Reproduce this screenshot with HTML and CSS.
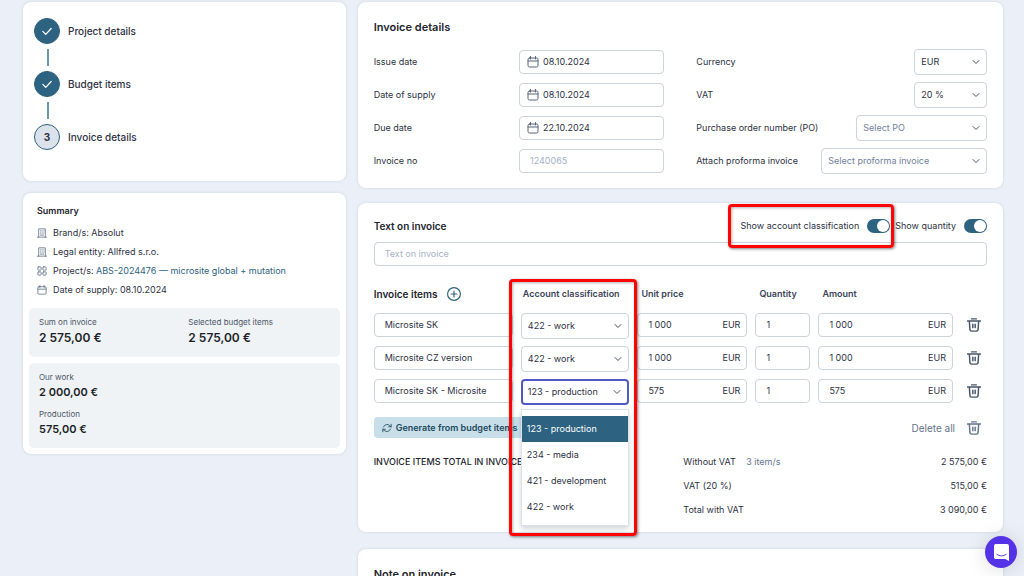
FILE: index.html
```html
<!DOCTYPE html>
<html lang="en">
  <head>
    <meta charset="UTF-8" />
    <meta name="viewport" content="width=device-width, initial-scale=1.0" />
    <title>Invoice details</title>
    <link rel="stylesheet" href="styles.css">
  </head>
  <body>
    <!-- Shared icons -->
    <svg class="sprite" aria-hidden="true">
      <symbol id="check" viewBox="0 0 24 24"><path d="M2 13l7 7L22 6" /></symbol>
      <symbol id="calendar" viewBox="0 0 24 24"><rect x="2" y="4" width="20" height="18" rx="3" /><path d="M2 10h20M7 1v5M17 1v5" /></symbol>
      <symbol id="building" viewBox="0 0 24 24"><path d="M1 22h22M4 22V2h16v20M8 7h1M12 7h1M16 7h1M8 12h1M12 12h1M16 12h1M8 17h8" /></symbol>
      <symbol id="grid" viewBox="0 0 24 24"><rect x="2" y="2" width="8" height="8" rx="2" /><rect x="14" y="2" width="8" height="8" rx="2" /><rect x="2" y="14" width="8" height="8" rx="2" /><rect x="14" y="14" width="8" height="8" rx="2" /></symbol>
      <symbol id="trash" viewBox="0 0 24 24"><path d="M1 5h22M8 1.500h8M4 5l1 15q.2 2.500 2.700 2.500h8.600q2.500 0 2.700-2.500L20 5M10 10.500v6M14 10.500v6" /></symbol>
      <symbol id="plus" viewBox="0 0 24 24"><circle cx="12" cy="12" r="11" /><path d="M12 7v10M7 12h10" /></symbol>
      <symbol id="refresh" viewBox="0 0 24 24"><path d="M22 3v6h-6M2 21v-6h6M3.500 9.500a9 9 0 0 1 15-3.300L22 9M2 15l3.500 2.800a9 9 0 0 0 15-3.300" /></symbol>
    </svg>

    <div class="layout">
      <aside class="sidebar">
        <section class="card steps-card">
          <ol class="steps">
            <li class="step">
              <span class="step-circle done"><svg class="icon"><use href="#check" /></svg></span>
              Project details
            </li>
            <li class="step">
              <span class="step-circle done"><svg class="icon"><use href="#check" /></svg></span>
              Budget items
            </li>
            <li class="step">
              <span class="step-circle">3</span>
              Invoice details
            </li>
          </ol>
        </section>

        <section class="card summary">
          <h3>Summary</h3>
          <ul class="summary-list">
            <li><svg class="icon"><use href="#building" /></svg>Brand/s: Absolut</li>
            <li><svg class="icon"><use href="#building" /></svg>Legal entity: Allfred s.r.o.</li>
            <li><svg class="icon"><use href="#grid" /></svg><span>Project/s: <a href="#">ABS-2024476 — microsite global + mutation</a></span></li>
            <li><svg class="icon"><use href="#calendar" /></svg>Date of supply: 08.10.2024</li>
          </ul>
          <dl class="panel sums">
            <div><dt>Sum on invoice</dt><dd>2 575,00 €</dd></div>
            <div><dt>Selected budget items</dt><dd>2 575,00 €</dd></div>
          </dl>
          <dl class="panel parts">
            <div><dt>Our work</dt><dd>2 000,00 €</dd></div>
            <div><dt>Production</dt><dd>575,00 €</dd></div>
          </dl>
        </section>
      </aside>

      <main class="content">
        <section class="card details">
          <h2>Invoice details</h2>
          <div class="details-grid">
            <div class="field">
              <label for="issue-date">Issue date</label>
              <div class="control date"><svg class="icon"><use href="#calendar" /></svg><input id="issue-date" type="text" value="08.10.2024" /></div>
            </div>
            <div class="field">
              <label for="currency">Currency</label>
              <select id="currency" class="short"><option>EUR</option></select>
            </div>
            <div class="field">
              <label for="supply-date">Date of supply</label>
              <div class="control date"><svg class="icon"><use href="#calendar" /></svg><input id="supply-date" type="text" value="08.10.2024" /></div>
            </div>
            <div class="field">
              <label for="vat">VAT</label>
              <select id="vat" class="short"><option>20 %</option></select>
            </div>
            <div class="field">
              <label for="due-date">Due date</label>
              <div class="control date"><svg class="icon"><use href="#calendar" /></svg><input id="due-date" type="text" value="22.10.2024" /></div>
            </div>
            <div class="field">
              <label for="po">Purchase order number (PO)</label>
              <select id="po" class="medium empty"><option>Select PO</option></select>
            </div>
            <div class="field">
              <label for="invoice-no">Invoice no</label>
              <div class="control"><input id="invoice-no" type="text" placeholder="1240065" /></div>
            </div>
            <div class="field">
              <label for="proforma">Attach proforma invoice</label>
              <select id="proforma" class="long empty"><option>Select proforma invoice</option></select>
            </div>
          </div>
        </section>

        <section class="card items">
          <div class="items-head">
            <h3><label for="invoice-text">Text on invoice</label></h3>
            <div class="toggles">
              <label class="toggle marked">Show account classification <input type="checkbox" role="switch" checked /></label>
              <label class="toggle">Show quantity <input type="checkbox" role="switch" checked /></label>
            </div>
          </div>
          <div class="control"><input id="invoice-text" type="text" placeholder="Text on invoice" /></div>

          <table class="items-table">
            <thead>
              <tr>
                <th class="col-name">
                  <div class="name-head">Invoice items
                    <button class="icon-button add" type="button" aria-label="Add item"><svg class="icon"><use href="#plus" /></svg></button>
                  </div>
                </th>
                <th class="col-class">Account classification</th>
                <th class="col-price">Unit price</th>
                <th class="col-qty">Quantity</th>
                <th class="col-amount">Amount</th>
                <th class="col-delete"></th>
              </tr>
            </thead>
            <tbody>
              <tr>
                <td><div class="control"><input type="text" aria-label="Item name" value="Microsite SK" /></div></td>
                <td><select aria-label="Account classification"><option>422 - work</option></select></td>
                <td><div class="control"><input type="text" aria-label="Unit price" value="1 000" /><span>EUR</span></div></td>
                <td><div class="control"><input type="text" aria-label="Quantity" value="1" /></div></td>
                <td><div class="control"><input type="text" aria-label="Amount" value="1 000" /><span>EUR</span></div></td>
                <td><button class="icon-button" type="button" aria-label="Delete item"><svg class="icon"><use href="#trash" /></svg></button></td>
              </tr>
              <tr>
                <td><div class="control"><input type="text" aria-label="Item name" value="Microsite CZ version" /></div></td>
                <td><select aria-label="Account classification"><option>422 - work</option></select></td>
                <td><div class="control"><input type="text" aria-label="Unit price" value="1 000" /><span>EUR</span></div></td>
                <td><div class="control"><input type="text" aria-label="Quantity" value="1" /></div></td>
                <td><div class="control"><input type="text" aria-label="Amount" value="1 000" /><span>EUR</span></div></td>
                <td><button class="icon-button" type="button" aria-label="Delete item"><svg class="icon"><use href="#trash" /></svg></button></td>
              </tr>
              <tr>
                <td><div class="control"><input type="text" aria-label="Item name" value="Microsite SK - Microsite" /></div></td>
                <td>
                  <div class="dropdown">
                    <select class="open" aria-label="Account classification"><option>123 - production</option></select>
                    <div class="menu">
                      <button class="selected" type="button">123 - production</button>
                      <button type="button">234 - media</button>
                      <button type="button">421 - development</button>
                      <button type="button">422 - work</button>
                    </div>
                  </div>
                </td>
                <td><div class="control"><input type="text" aria-label="Unit price" value="575" /><span>EUR</span></div></td>
                <td><div class="control"><input type="text" aria-label="Quantity" value="1" /></div></td>
                <td><div class="control"><input type="text" aria-label="Amount" value="575" /><span>EUR</span></div></td>
                <td><button class="icon-button" type="button" aria-label="Delete item"><svg class="icon"><use href="#trash" /></svg></button></td>
              </tr>
            </tbody>
          </table>

          <div class="actions">
            <button class="generate" type="button"><svg class="icon"><use href="#refresh" /></svg>Generate from budget items</button>
            <button class="delete-all" type="button">Delete all <svg class="icon"><use href="#trash" /></svg></button>
          </div>

          <div class="totals">
            <h4>INVOICE ITEMS TOTAL IN INVOICE</h4>
            <dl>
              <div><dt>Without VAT <span>3 item/s</span></dt><dd>2 575,00 €</dd></div>
              <div><dt>VAT (20 %)</dt><dd>515,00 €</dd></div>
              <div><dt>Total with VAT</dt><dd>3 090,00 €</dd></div>
            </dl>
          </div>
        </section>

        <section class="card note">
          <h2>Note on invoice</h2>
        </section>
      </main>
    </div>

    <button class="chat" type="button" aria-label="Open chat">
      <svg viewBox="0 0 16 18"><path class="bubble" d="M2 0h12a2 2 0 0 1 2 2v16l-4-2H2a2 2 0 0 1-2-2V2a2 2 0 0 1 2-2z" /><path class="smile" d="M3 11q5 3.500 10 0" /></svg>
    </button>
  </body>
</html>
```
FILE: styles.css
```css
*,
*::before,
*::after {
  box-sizing: border-box;
}

body {
  margin: 0;
  height: 100vh;
  overflow: hidden;
  background-color: #ebeff7;
  color: #2d3142;
  font-family: Inter, "Liberation Sans", sans-serif;
  font-size: 9px;
  line-height: 12px;
}

h2,
h3,
h4,
ul,
ol,
dl,
dd {
  margin: 0;
  padding: 0;
}

h2,
h3,
h4 {
  font-weight: 600;
  color: #22252e;
}

h2 {
  font-size: 11px;
  line-height: 16px;
}

ul,
ol {
  list-style: none;
}

a {
  color: #2d6380;
  text-decoration: none;
}

input,
select,
button {
  font: inherit;
  color: inherit;
}

button {
  border: none;
  background: none;
  padding: 0;
  cursor: pointer;
}

.sprite {
  position: absolute;
  width: 0;
  height: 0;
}

.icon {
  flex: none;
  width: 10px;
  height: 10px;
  fill: none;
  stroke: currentColor;
  stroke-width: 2;
  stroke-linecap: round;
  stroke-linejoin: round;
}

.layout {
  display: grid;
  grid-template-columns: 1fr 2fr;
  gap: 12px;
  align-items: start;
  padding: 2px 21px 0 23px;
}

.card {
  background-color: white;
  border-radius: 8px;
  box-shadow: 0 0 3px rgba(70, 100, 140, 0.2);
}

/* Left column */
.sidebar {
  display: grid;
  gap: 12px;
}

.steps-card {
  padding: 16px 11px 31px;
}

.steps {
  display: grid;
  gap: 27px;
}

.step {
  position: relative;
  display: flex;
  align-items: center;
  gap: 8px;
  font-size: 10px;
  font-weight: 500;
}

.step:not(:last-child)::after {
  content: "";
  position: absolute;
  left: 13px;
  top: 31px;
  width: 2px;
  height: 17px;
  background-color: #6a97b0;
}

.step-circle {
  display: flex;
  align-items: center;
  justify-content: center;
  width: 26px;
  height: 26px;
  border: 1px solid #2d6380;
  border-radius: 50%;
  background-color: #dce2ec;
  font-weight: 700;
}

.step-circle.done {
  background-color: #2d6380;
  color: white;
}

.step-circle .icon {
  stroke-width: 3;
}

.summary {
  padding: 12px 6px 6px;
}

.summary h3 {
  padding: 0 8px;
  font-size: 9px;
}

.summary-list {
  display: grid;
  gap: 7px;
  padding: 10px 8px 12px;
}

.summary-list li {
  display: flex;
  align-items: center;
  gap: 6px;
}

.summary-list .icon {
  color: #64748b;
}

.panel {
  padding: 8px 10px;
  border-radius: 5px;
  background-color: #eff3f6;
}

.panel dt {
  font-size: 8px;
  color: #4c5566;
}

.panel dd {
  font-size: 11px;
  font-weight: 600;
  line-height: 18px;
  color: #1c1f28;
}

.sums {
  display: grid;
  grid-template-columns: 1fr 1fr;
  gap: 8px;
  padding-bottom: 9px;
}

.sums dd {
  font-size: 12px;
  line-height: 20px;
}

.parts {
  display: grid;
  gap: 7px;
  margin-top: 6px;
  padding-bottom: 10px;
}

/* Form controls */
.control {
  display: flex;
  align-items: center;
  height: 24px;
  padding: 0 6px 0 10px;
  border: 1px solid #cbd3dd;
  border-radius: 4px;
  background-color: white;
}

.control input {
  flex: 1;
  width: 100%;
  min-width: 0;
  padding: 0;
  border: none;
  outline: none;
  background: none;
}

.control input::placeholder {
  color: #a5b1c6;
}

.control.date {
  gap: 4px;
  padding-left: 7px;
}

.control .icon {
  width: 12px;
  height: 12px;
  color: #566579;
}

select {
  width: 100%;
  height: 26px;
  padding: 0 20px 0 6px;
  border: 1px solid #cbd3dd;
  border-radius: 4px;
  appearance: none;
  background: white url("data:image/svg+xml,%3Csvg xmlns='http://www.w3.org/2000/svg' width='8' height='8' fill='none' stroke='%23475569' stroke-linecap='round' stroke-linejoin='round'%3E%3Cpath d='M1 2.500l3 3 3-3'/%3E%3C/svg%3E") no-repeat right 6px center;
}

select.empty {
  color: #71809a;
}

/* Invoice details */
.details {
  padding: 17px 16px 11px;
}

.details-grid {
  display: grid;
  grid-template-columns: 1fr 1fr;
  grid-auto-rows: 33px;
  column-gap: 32px;
  margin-top: 10px;
}

.field {
  display: flex;
  align-items: center;
  justify-content: space-between;
}

.field .control {
  width: 50%;
}

.short {
  width: 25%;
}

.medium {
  width: 45%;
}

.long {
  width: 57%;
}

/* Invoice items */
.content {
  min-width: 0;
}

.items {
  margin-top: 15px;
  padding: 16px 16px 10px;
}

.items-head {
  display: flex;
  align-items: center;
  justify-content: space-between;
  height: 14px;
  margin-bottom: 9px;
}

.items-head h3 {
  font-size: 10px;
}

.toggles {
  display: flex;
  gap: 5px;
}

.toggle {
  position: relative;
  display: flex;
  align-items: center;
  gap: 8px;
}

.toggle input {
  appearance: none;
  display: flex;
  justify-content: flex-end;
  width: 23px;
  height: 14px;
  margin: 0;
  padding: 1px;
  border-radius: 7px;
  background-color: #2d6380;
}

.toggle input::before {
  content: "";
  width: 12px;
  height: 12px;
  border-radius: 50%;
  background-color: white;
}

/* Red frames that point out the classification controls */
.toggle.marked::after,
.col-class::after {
  content: "";
  position: absolute;
  z-index: 3;
  border: 3px solid #fd0505;
  border-radius: 4px;
  box-shadow: 1px 1px 3px rgba(0, 0, 0, 0.5), inset 1px 1px 3px rgba(0, 0, 0, 0.3);
  pointer-events: none;
}

.toggle.marked::after {
  inset: -15px -4px -15px -13px;
}

.items-table {
  width: 100%;
  margin-top: 14px;
  border-collapse: collapse;
  table-layout: fixed;
}

.items-table th {
  height: 33px;
  padding: 0 0 6px;
  text-align: left;
  font-weight: 600;
  color: #3b4459;
}

.items-table td {
  height: 33px;
  padding: 0 8px 7px 0;
  vertical-align: top;
}

.items-table td:last-child {
  padding-right: 0;
}

.col-name {
  width: 24%;
}

.items-table .col-class {
  position: relative;
  width: 19%;
  padding-left: 2px;
}

/* Reaches from the column head down past the open menu */
.col-class::after {
  top: -1px;
  left: -12px;
  right: 0;
  height: 257px;
}

.col-price {
  width: 118px;
}

.items-table .col-price,
.items-table .col-qty,
.items-table .col-amount {
  padding-left: 4px;
}

.col-qty {
  width: 63px;
}

.col-delete {
  width: 26px;
}

.name-head {
  display: flex;
  align-items: center;
  gap: 10px;
  font-size: 10px;
  color: #22252e;
}

.icon-button {
  display: flex;
  align-items: center;
  justify-content: center;
  width: 26px;
  height: 24px;
  color: #475569;
}

.icon-button .icon,
.delete-all .icon {
  width: 14px;
  height: 14px;
  stroke-width: 2.5;
}

.icon-button.add {
  width: 14px;
  height: 14px;
  color: #2d6380;
}

.icon-button.add .icon {
  stroke-width: 2;
}

.dropdown {
  position: relative;
}

select.open {
  border: 2px solid #5058c4;
  padding-left: 5px;
}

.menu {
  position: absolute;
  z-index: 2;
  top: 30px;
  left: 0;
  right: 0;
  padding: 6px 0 5px;
  border: 1px solid #dde2ea;
  background-color: white;
  box-shadow: 0 3px 6px rgba(30, 40, 60, 0.2);
}

.menu button {
  display: block;
  width: 100%;
  height: 26px;
  padding: 0 5px;
  text-align: left;
}

.menu .selected {
  background-color: #2d6380;
  color: white;
}

.actions {
  display: flex;
  align-items: center;
  justify-content: space-between;
  margin-top: 5px;
}

.generate {
  display: flex;
  align-items: center;
  gap: 4px;
  height: 21px;
  padding: 0 8px;
  border-radius: 4px;
  background-color: #c8dfe9;
  color: #214a5f;
  font-weight: 600;
}

.delete-all {
  display: flex;
  align-items: center;
  gap: 12px;
  padding-right: 6px;
  color: #64748b;
  font-size: 10px;
}

.totals {
  display: grid;
  grid-template-columns: 1fr 1fr;
  column-gap: 6px;
  margin-top: 12px;
  line-height: 24px;
}

.totals h4 {
  font-weight: 500;
  white-space: nowrap;
}

.totals dl div {
  display: flex;
  justify-content: space-between;
}

.totals dt span {
  margin-left: 8px;
  color: #64748b;
}

.note {
  margin-top: 17px;
  padding: 17px 16px;
}

/* Chat launcher */
.chat {
  position: fixed;
  right: 7px;
  bottom: 8px;
  display: flex;
  align-items: center;
  justify-content: center;
  width: 32px;
  height: 32px;
  border-radius: 50%;
  background-color: #5433e6;
  box-shadow: 0 1px 20px rgba(0, 0, 0, 0.15);
}

.chat svg {
  width: 15px;
  height: 17px;
}

.bubble {
  fill: white;
}

.smile {
  fill: none;
  stroke: #5433e6;
  stroke-linecap: round;
}
```
